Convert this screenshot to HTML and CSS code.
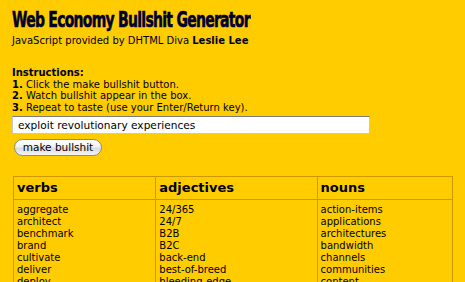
FILE: index.html
```html
<!DOCTYPE html>
<html>
<head>
<meta charset="utf-8">
<link rel="stylesheet" href="styles.css">
</head>
<body>
<div class="page">
  <h1 class="title">Web Economy Bullshit Generator</h1>
  <p class="credit">JavaScript provided by DHTML Diva <b>Leslie Lee</b></p>
  <div class="instructions">
    <div><b>Instructions:</b></div>
    <div><b>1.</b> Click the make bullshit button.</div>
    <div><b>2.</b> Watch bullshit appear in the box.</div>
    <div><b>3.</b> Repeat to taste (use your Enter/Return key).</div>
  </div>
  <input class="output" type="text" value="exploit revolutionary experiences">
  <div class="btnrow"><button class="btn">make bullshit</button></div>
  <table class="words">
    <thead>
      <tr><th class="c1">verbs</th><th class="c2">adjectives</th><th class="c3">nouns</th></tr>
    </thead>
    <tbody>
      <tr>
        <td>aggregate<br>architect<br>benchmark<br>brand<br>cultivate<br>deliver<br>deploy</td>
        <td>24/365<br>24/7<br>B2B<br>B2C<br>back-end<br>best-of-breed<br>bleeding-edge</td>
        <td>action-items<br>applications<br>architectures<br>bandwidth<br>channels<br>communities<br>content</td>
      </tr>
    </tbody>
  </table>
</div>
</body>
</html>
```
FILE: styles.css
```css
html, body {
  margin: 0;
  padding: 0;
  background: #ffcc00;
}
body {
  font-family: "DejaVu Sans", Verdana, sans-serif;
  font-size: 10px;
  color: #000;
}
.page {
  padding: 9px 12px 0 12px;
  display: flex;
  flex-direction: column;
  align-items: flex-start;
}
.title {
  margin: 0;
  font-family: "DejaVu Sans Condensed", "DejaVu Sans", sans-serif;
  font-weight: bold;
  font-size: 22px;
  line-height: 22px;
  color: #000033;
  letter-spacing: -1px;
  -webkit-text-stroke: 0.6px #000033;
  transform: scaleX(0.705);
  transform-origin: left center;
  white-space: nowrap;
}
.credit {
  margin: 4px 0 0 0;
  line-height: 12px;
}
.instructions {
  margin-top: 20px;
  line-height: 11.7px;
}
.output {
  margin: 2px 0 0 0;
  width: 358px;
  height: 18px;
  box-sizing: border-box;
  border: 1px solid #c8c8c8;
  border-top-color: #7a7a7a;
  background: #fff;
  padding: 0 5px;
  font-family: "DejaVu Sans", Verdana, sans-serif;
  font-size: 10.6px;
  color: #000;
}
.btnrow {
  margin-top: 5px;
  padding-left: 2px;
  display: flex;
}
.btn {
  height: 17px;
  width: 88px;
  padding: 0;
  border: 1px solid #8a8a8a;
  border-radius: 9px;
  background: linear-gradient(#ffffff 0%, #f2f2f2 45%, #dcdcdc 55%, #f4f4f4 100%);
  font-family: "DejaVu Sans", Verdana, sans-serif;
  font-size: 10.5px;
  color: #000;
  line-height: 15px;
}
.words {
  margin: 20px 0 0 1px;
  border-collapse: collapse;
  border: 1px solid #cc9900;
}
.words th, .words td {
  border: 1px solid #cc9900;
  text-align: left;
  vertical-align: top;
  padding: 0 3px;
}
.words th {
  font-size: 13px;
  font-weight: bold;
  height: 22px;
  line-height: 22px;
}
.words td {
  padding-top: 4px;
  line-height: 12px;
}
.c1 { width: 136px; }
.c2 { width: 155px; }
.c3 { width: 129px; }
```
